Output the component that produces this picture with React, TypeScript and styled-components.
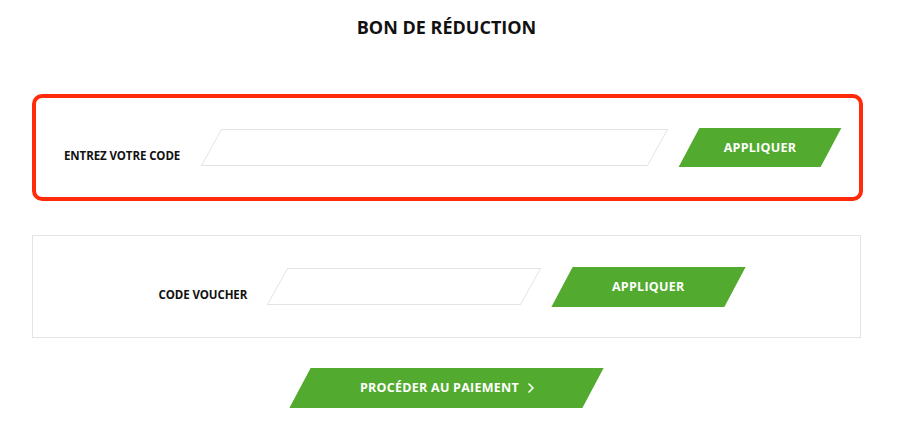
import React from "react";
import styled, { createGlobalStyle } from "styled-components";

const Global = createGlobalStyle`
  html, body { margin: 0; padding: 0; background: #ffffff; }
  body { font-family: "Open Sans", "Liberation Sans", Arial, sans-serif; color: #111111; }
  * { box-sizing: border-box; }
`;

const Page = styled.div`
  width: 829px;
  margin-left: 32px;
  display: flex;
  flex-direction: column;
  align-items: stretch;
`;

const Title = styled.h1`
  margin: 15px 0 0;
  font-size: 18px;
  line-height: 24px;
  font-weight: 700;
  text-align: center;
  color: #111111;
`;

const Panel = styled.section<{ $highlight?: boolean }>`
  display: flex;
  align-items: center;
  justify-content: center;
  gap: 31px;
  margin-top: ${(p) => (p.$highlight ? "55px" : "34px")};
  width: ${(p) => (p.$highlight ? "831px" : "829px")};
  height: ${(p) => (p.$highlight ? "107px" : "103px")};
  border: ${(p) => (p.$highlight ? "4px solid #ff2b0a" : "1px solid #e4e4e4")};
  border-radius: ${(p) => (p.$highlight ? "10px" : "0")};
`;

const Label = styled.label<{ $width: number }>`
  width: ${(p) => p.$width}px;
  margin-top: 17px;
  font-size: 11.5px;
  line-height: 14px;
  font-weight: 700;
  letter-spacing: -0.1px;
  color: #111111;
  white-space: nowrap;
`;

const FieldFrame = styled.div<{ $width: number }>`
  width: ${(p) => p.$width}px;
  height: 37px;
  border: 1px solid #e3e3e3;
  transform: skewX(-29deg);
  background: #ffffff;
  display: flex;
`;

const Field = styled.input`
  flex: 1;
  min-width: 0;
  border: none;
  outline: none;
  background: transparent;
  transform: skewX(29deg);
  padding: 0 14px;
  font-family: inherit;
  font-size: 13px;
`;

const Slant = styled.button<{ $width: number; $height: number }>`
  width: ${(p) => p.$width}px;
  height: ${(p) => p.$height}px;
  border: none;
  padding: 0;
  background: #52ab2e;
  transform: skewX(-28deg);
  cursor: pointer;
  display: flex;
  align-items: center;
  justify-content: center;
`;

const SlantText = styled.span`
  transform: skewX(28deg);
  display: flex;
  align-items: center;
  gap: 9px;
  color: #ffffff;
  font-family: "Open Sans", "Liberation Sans", Arial, sans-serif;
  font-size: 12.5px;
  font-weight: 700;
  letter-spacing: 0.25px;
  line-height: 16px;
`;

const Footer = styled.div`
  display: flex;
  justify-content: center;
  margin-top: 30px;
`;

const Chevron = () => (
  <svg width="6" height="10" viewBox="0 0 6 10" fill="none">
    <polyline points="1,1 5,5 1,9" stroke="#ffffff" strokeWidth="1.6" strokeLinecap="round" strokeLinejoin="round" />
  </svg>
);

export default function App() {
  return (
    <>
      <Global />
      <Page>
        <Title>BON DE RÉDUCTION</Title>
        <Panel $highlight>
          <Label $width={116}>ENTREZ VOTRE CODE</Label>
          <FieldFrame $width={447}>
            <Field aria-label="Entrez votre code" />
          </FieldFrame>
          <Slant $width={142} $height={39}>
            <SlantText>APPLIQUER</SlantText>
          </Slant>
        </Panel>
        <Panel>
          <Label $width={87}>CODE VOUCHER</Label>
          <FieldFrame $width={254}>
            <Field aria-label="Code voucher" />
          </FieldFrame>
          <Slant $width={173} $height={40}>
            <SlantText>APPLIQUER</SlantText>
          </Slant>
        </Panel>
        <Footer>
          <Slant $width={293} $height={40}>
            <SlantText>
              PROCÉDER AU PAIEMENT
              <Chevron />
            </SlantText>
          </Slant>
        </Footer>
      </Page>
    </>
  );
}
